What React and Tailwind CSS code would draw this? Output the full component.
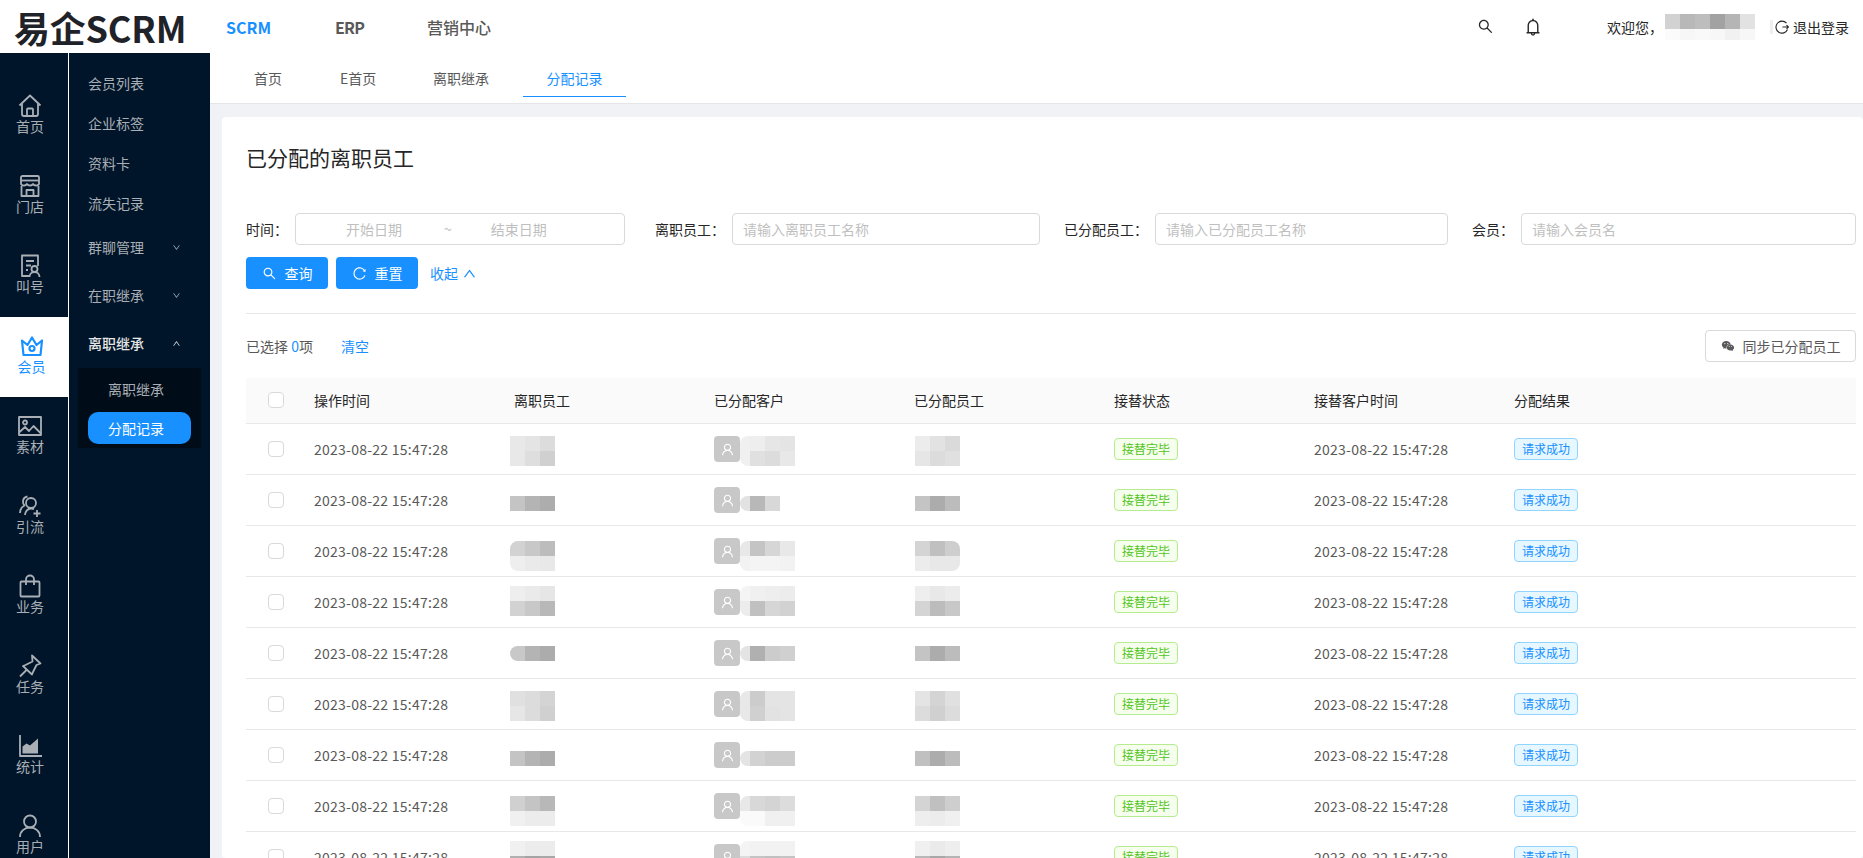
import { AiOutlineSearch, AiOutlineBell, AiOutlineReload, AiOutlineUser, AiOutlineUp, AiOutlineDown, AiFillWechat } from 'react-icons/ai';

const DATE = '2023-08-22 15:47:28';

const railIcons = {
  home: (
    <>
      <path d="M1.500 11.500 12 1.500l10.500 10" />
      <path d="M4 9.500V20a2 2 0 0 0 2 2h12a2 2 0 0 0 2-2V9.500" />
      <path d="M9 22v-6.500a1 1 0 0 1 1-1h4a1 1 0 0 1 1 1V22" />
    </>
  ),
  store: (
    <>
      <path d="M4.500 2h15A1.500 1.500 0 0 1 21 3.500V10a3 3 0 0 1-3 1.500 3.500 3.500 0 0 1-3-1.500 3.500 3.500 0 0 1-3 1.500A3.500 3.500 0 0 1 9 10a3.500 3.500 0 0 1-3 1.500A3 3 0 0 1 3 10V3.500A1.500 1.500 0 0 1 4.500 2Z" />
      <path d="M3 6.500h18" />
      <path d="M3.500 12v10h17V12" />
      <path d="M8.500 22v-6h7v6" />
    </>
  ),
  call: (
    <>
      <path d="M12 22H4V1.500h16V12" />
      <path d="M8 7h8M8 11.500h5M8 16h2" />
      <circle cx="16.500" cy="15" r="3" />
      <path d="M11.500 23c0-3 2.200-5 5-5s5 2 5 5" />
    </>
  ),
  crown: (
    <>
      <path d="M2 6.500 7.500 11 12 3.500l4.500 7.500L22 6.500 20.500 21h-17Z" strokeWidth="2.200" />
      <circle cx="12" cy="14.500" r="2.500" strokeWidth="2.200" />
    </>
  ),
  image: (
    <>
      <rect x="1" y="3" width="22" height="18" />
      <circle cx="7" cy="8.500" r="2" />
      <path d="m1 18.500 6-5.500 4 4 4.500-5 7.500 7.500" />
    </>
  ),
  flow: (
    <>
      <circle cx="13" cy="9" r="5" />
      <path d="M9.500 2.500A5.500 5.500 0 0 0 5 8c0 1.500.5 2.500 1.500 3.500C3.500 13 2 16 2 19" />
      <path d="M7 21c0-3 2.500-6.500 6-6.500 1 0 2 .2 3 .8" />
      <path d="M19 16v7M15.500 19.500h7" />
    </>
  ),
  bag: (
    <>
      <rect x="2.500" y="7.500" width="19" height="15" rx="1" />
      <path d="M8 11V5.500a4 4 0 0 1 8 0V11" />
    </>
  ),
  pin: (
    <>
      <path d="m14 1.500 8.500 8-4 1.500-3.500 7-1 2.500-9-8.500 2.500-1 7-3.500Z" />
      <path d="m8.500 16-6.500 6.500" />
    </>
  ),
  chart: (
    <>
      <path d="M2 1v21h22" fill="none" />
      <path d="M4.500 19.500v-7l4-3 3.500 2L20 4.500v15Z" fill="currentColor" stroke="none" />
    </>
  ),
  user: (
    <>
      <circle cx="12" cy="7.500" r="6" />
      <path d="M2 23c0-5.500 4.500-9.500 10-9.500S22 17.500 22 23" />
    </>
  ),
};

const railItems = [
  { label: '首页', icon: 'home' },
  { label: '门店', icon: 'store' },
  { label: '叫号', icon: 'call' },
  { label: '会员', icon: 'crown', active: true },
  { label: '素材', icon: 'image' },
  { label: '引流', icon: 'flow' },
  { label: '业务', icon: 'bag' },
  { label: '任务', icon: 'pin' },
  { label: '统计', icon: 'chart' },
  { label: '用户', icon: 'user' },
];

// mosaic cells per row: offset from row top, then a grey for each cell
const rows = [
  {
    top: 12,
    staff: ['e8e8e8 e4e4e4 dcdcdc', 'e8e8e8 dedede d0d0d0'],
    client: ['f0f0f0 eeeeee e6e6e6 e4e4e4', 'f0f0f0 e0e0e0 dcdcdc e8e8e8'],
    assign: ['ececec e2e2e2 dadada', 'e6e6e6 dcdcdc e0e0e0'],
  },
  {
    top: 21,
    staff: ['c4c4c4 b4b4b4 adadad'],
    client: ['e2e2e2 b8b8b8 d8d8d8 ffffff'],
    assign: ['c4c4c4 acacac bcbcbc'],
  },
  {
    top: 15,
    round: true,
    roundAssign: true,
    staff: ['d2d2d2 c8c8c8 bcbcbc', 'eeeeee eaeaea e8e8e8'],
    client: ['e8e8e8 c4c4c4 d6d6d6 e8e8e8', 'f2f2f2 f4f4f4 f4f4f4 f2f2f2'],
    assign: ['d4d4d4 c0c0c0 cecece', 'ececec e8e8e8 e8e8e8'],
  },
  {
    top: 9,
    staff: ['eeeeee eaeaea e6e6e6', 'd2d2d2 c8c8c8 b8b8b8'],
    client: ['f4f4f4 f0f0f0 eeeeee ececec', 'ececec c0c0c0 d6d6d6 d2d2d2'],
    assign: ['eeeeee e8e8e8 ececec', 'd4d4d4 bcbcbc c8c8c8'],
  },
  {
    top: 18,
    round: true,
    staff: ['c8c8c8 b4b4b4 acacac'],
    client: ['e4e4e4 b0b0b0 cccccc d0d0d0'],
    assign: ['c4c4c4 acacac bcbcbc'],
  },
  {
    top: 12,
    staff: ['e0e0e0 dcdcdc d4d4d4', 'e6e6e6 dcdcdc d0d0d0'],
    client: ['e8e8e8 cccccc e4e4e4 e4e4e4', 'e8e8e8 d0d0d0 e2e2e2 e4e4e4'],
    assign: ['e4e4e4 d4d4d4 e0e0e0', 'dcdcdc d0d0d0 dcdcdc'],
  },
  {
    top: 21,
    staff: ['c4c4c4 b4b4b4 acacac'],
    client: ['e4e4e4 d2d2d2 cccccc cccccc'],
    assign: ['c0c0c0 acacac bcbcbc'],
  },
  {
    top: 15,
    staff: ['d0d0d0 c4c4c4 b8b8b8', 'f0f0f0 ececec ececec'],
    client: ['e8e8e8 d8d8d8 d4d4d4 dcdcdc', 'fafafa fafafa f0f0f0 f0f0f0'],
    assign: ['d4d4d4 c0c0c0 cecece', 'eeeeee ececec f0f0f0'],
  },
  {
    top: 9,
    staff: ['f0f0f0 ececec ececec', 'b0b0b0 a4a4a4 a8a8a8'],
    client: ['f4f4f4 f2f2f2 f2f2f2 f2f2f2', 'dcdcdc c4c4c4 c0c0c0 c4c4c4'],
    assign: ['f0f0f0 eaeaea eeeeee', 'b8b8b8 a8a8a8 b4b4b4'],
  },
];

function RailIcon({ name }) {
  return (
    <svg viewBox="0 0 24 24" className="h-6 w-6 shrink-0" fill="none" stroke="currentColor" strokeWidth="1.800" strokeLinejoin="round">
      {railIcons[name]}
    </svg>
  );
}

function Mosaic({ lines, top, lead, className = '' }) {
  return (
    <div className={`flex flex-col self-start overflow-hidden ${className}`} style={{ marginTop: top }}>
      {lines.map((line, i) => (
        <div key={i} className="flex h-[15px]">
          {line.split(' ').map((c, j) => (
            <span key={j} style={{ background: `#${c}`, width: lead && j === 0 ? 10 : 15 }} />
          ))}
        </div>
      ))}
    </div>
  );
}

function Checkbox() {
  return <span className="block h-4 w-4 rounded-sm border border-[#d9d9d9] bg-white" />;
}

function Field({ label, width, labelWidth, placeholder }) {
  return (
    <div className="flex items-center">
      <label className="shrink-0 text-[#262626]" style={{ width: labelWidth }}>{label}</label>
      <input
        placeholder={placeholder}
        style={{ width }}
        className="h-8 rounded border border-[#d9d9d9] px-[10px] text-sm outline-none placeholder:text-[#bfbfbf]"
      />
    </div>
  );
}

function Row({ row }) {
  return (
    <div className="grid h-[51px] shrink-0 grid-cols-[68px_200px_200px_200px_200px_200px_200px_1fr] items-center border-b border-[#e8e8e8] text-[#595959]">
      <div className="pl-[22px]"><Checkbox /></div>
      <div className="tracking-[0.25px]">{DATE}</div>
      <div className="flex h-full -ml-1"><Mosaic lines={row.staff} top={row.top} className={row.round ? 'rounded-l-lg' : ''} /></div>
      <div className="flex h-full items-center">
        <span className="flex h-[26px] w-[26px] shrink-0 items-center justify-center rounded bg-[#c8c8c8] text-white">
          <AiOutlineUser size={15} />
        </span>
        <div className="flex h-full"><Mosaic lines={row.client} top={row.top} lead className="rounded-l-lg" /></div>
      </div>
      <div className="flex h-full ml-px"><Mosaic lines={row.assign} top={row.top} className={row.roundAssign ? 'rounded-r-lg' : ''} /></div>
      <div>
        <span className="inline-flex h-[22px] w-[64px] items-center justify-center rounded border border-[#b7eb8f] bg-[#f6ffed] text-xs text-[#52c41a]">接替完毕</span>
      </div>
      <div className="tracking-[0.25px]">{DATE}</div>
      <div>
        <span className="inline-flex h-[22px] w-[64px] items-center justify-center rounded border border-[#91d5ff] bg-[#e6f7ff] text-xs text-[#1890ff]">请求成功</span>
      </div>
    </div>
  );
}

export default function App() {
  return (
    <div className="flex h-screen w-full flex-col overflow-hidden bg-white text-sm" style={{ fontFamily: '"Noto Sans CJK SC", "Noto Sans", sans-serif' }}>
      {/* top bar */}
      <header className="flex h-[53px] shrink-0 items-center">
        <div className="w-[226px] shrink-0 pl-[14px] text-[36px] font-bold leading-none tracking-[-0.2px] text-[#1f2329]">易企SCRM</div>
        <nav className="flex items-center text-base font-medium text-[#595959]">
          <span className="w-[109px] font-bold text-[#1890ff]">SCRM</span>
          <span className="w-[92px] font-bold tracking-[-0.8px]">ERP</span>
          <span>营销中心</span>
        </nav>
        <div className="ml-auto flex items-center pr-[14px] text-[#262626]">
          <AiOutlineSearch size={17} className="mr-[29px]" />
          <AiOutlineBell size={20} className="mr-[64px]" />
          <span>欢迎您，</span>
          <div className="ml-[2px] flex h-[26px] w-[90px] flex-col">
            <div className="flex h-[15px]">
              <i className="w-[15px] bg-[#d2d2d2]" />
              <i className="w-[15px] bg-[#b8b8b8]" />
              <i className="w-[15px] bg-[#bdbdbd]" />
              <i className="w-[15px] bg-[#a2a2a2]" />
              <i className="w-[15px] bg-[#b5b5b5]" />
              <i className="w-[15px] bg-[#e2e2e2]" />
            </div>
            <div className="flex h-[11px]">
              <i className="w-[15px] bg-[#fbfbfb]" />
              <i className="w-[15px] bg-[#f7f7f7]" />
              <i className="w-[15px] bg-[#f9f9f9]" />
              <i className="w-[15px] bg-[#f7f7f7]" />
              <i className="w-[15px] bg-[#f1f1f1]" />
              <i className="w-[15px] bg-[#f7f7f7]" />
            </div>
          </div>
          <span className="ml-[15px] mr-[2px] h-[14px] w-[3px] bg-[#eeeeee]" />
          <svg viewBox="0 0 14 14" className="mr-1 h-[14px] w-[14px]" fill="none" stroke="currentColor" strokeWidth="1.100">
            <path d="M11.500 3.200A6 6 0 1 0 12.500 9.500" />
            <path d="M7.500 7h6M11.500 5.200 13.500 7l-2 1.800" />
          </svg>
          <span>退出登录</span>
        </div>
      </header>

      <div className="flex min-h-0 flex-1">
        {/* icon rail */}
        <aside className="flex w-[68px] shrink-0 flex-col bg-[#001529] pt-6 text-[#a9afb5]">
          {railItems.map((item) => (
            <div
              key={item.label}
              className={`flex h-20 shrink-0 flex-col items-center pt-[17px] ${item.active ? 'bg-white pr-[5px] text-[#1890ff]' : 'pr-2'}`}
            >
              <RailIcon name={item.icon} />
              <span className="-mt-[2px] leading-[20px]">{item.label}</span>
            </div>
          ))}
        </aside>

        {/* sub menu */}
        <aside className="ml-px flex w-[141px] shrink-0 flex-col bg-[#001529] pt-[10px] text-[#a9afb5]">
          <div className="flex h-10 shrink-0 items-center pl-[19px]">会员列表</div>
          <div className="flex h-10 shrink-0 items-center pl-[19px]">企业标签</div>
          <div className="flex h-10 shrink-0 items-center pl-[19px]">资料卡</div>
          <div className="flex h-10 shrink-0 items-center pl-[19px]">流失记录</div>
          <div className="flex h-12 shrink-0 items-center justify-between pl-[19px] pr-[29px]">
            群聊管理 <AiOutlineDown size={9} />
          </div>
          <div className="flex h-12 shrink-0 items-center justify-between pl-[19px] pr-[29px]">
            在职继承 <AiOutlineDown size={9} />
          </div>
          <div className="flex h-12 shrink-0 items-center justify-between pl-[19px] pr-[29px] font-medium text-[#e6e6e6]">
            离职继承 <AiOutlineUp size={9} />
          </div>
          <div className="mx-[9px] mt-px flex h-20 shrink-0 flex-col bg-[#000c17] px-[10px]">
            <div className="mb-[3px] flex h-[41px] shrink-0 items-center pl-5">离职继承</div>
            <div className="flex h-8 shrink-0 items-center rounded-[10px] bg-[#1890ff] pl-5 text-white">分配记录</div>
          </div>
        </aside>

        <main className="flex min-w-0 flex-1 flex-col bg-[#f0f2f5]">
          {/* tabs */}
          <div className="flex h-[51px] shrink-0 border-b border-[#e4e6ea] bg-white text-[#595959]">
            <div className="flex w-[130px] items-center pl-[44px]">首页</div>
            <div className="flex w-[93px] items-center">E首页</div>
            <div className="flex w-[90px] items-center">离职继承</div>
            <div className="mb-[6px] flex w-[103px] items-center justify-center border-b border-[#1890ff] pt-[6px] text-[#1890ff]">分配记录</div>
          </div>

          {/* content card */}
          <div className="ml-3 mt-[13px] flex min-h-0 flex-1 flex-col overflow-hidden rounded-sm bg-white pl-6 pr-[7px]">
            <h1 className="mt-[25px] text-[21px] font-normal leading-[30px] text-[#262626]">已分配的离职员工</h1>

            <div className="mt-[41px] flex items-center gap-6">
              <div className="flex items-center">
                <label className="w-[49px] shrink-0 text-[#262626]">时间：</label>
                <div className="flex h-8 w-[330px] items-center rounded border border-[#d9d9d9] text-[#bfbfbf]">
                  <span className="ml-[50px]">开始日期</span>
                  <span className="ml-[42px]">~</span>
                  <span className="ml-[39px]">结束日期</span>
                </div>
              </div>
              <div className="ml-1.5"><Field label="离职员工：" labelWidth={77} width={308} placeholder="请输入离职员工名称" /></div>
              <Field label="已分配员工：" labelWidth={91} width={293} placeholder="请输入已分配员工名称" />
              <div className="min-w-0 flex-1"><Field label="会员：" labelWidth={49} width={335} placeholder="请输入会员名" /></div>
            </div>

            <div className="mt-3 flex items-center gap-2">
              <button className="flex h-8 w-[82px] items-center justify-center gap-2 rounded bg-[#1890ff] text-white"><AiOutlineSearch size={15} />查询</button>
              <button className="flex h-8 w-[82px] items-center justify-center gap-2 rounded bg-[#1890ff] text-white"><AiOutlineReload size={15} />重置</button>
              <button className="ml-1 flex items-center gap-1 text-[#1890ff]">收起 <AiOutlineUp size={15} /></button>
            </div>

            <div className="mt-6 border-t border-[#e8e8e8]" />

            <div className="mt-4 flex h-8 items-center text-[#595959]">
              <span>已选择 <span className="text-[#1890ff]">0</span>项</span>
              <span className="ml-[28px] text-[#1890ff]">清空</span>
              <button className="ml-auto flex h-8 w-[151px] items-center justify-center gap-2 rounded border border-[#d9d9d9] bg-white">
                <AiFillWechat size={14} />同步已分配员工
              </button>
            </div>

            {/* table */}
            <div className="mt-4 grid h-[46px] shrink-0 grid-cols-[68px_200px_200px_200px_200px_200px_200px_1fr] items-center border-b border-[#e8e8e8] bg-[#fafafa] pb-px text-[#262626]">
              <div className="pl-[22px]"><Checkbox /></div>
              <div>操作时间</div>
              <div>离职员工</div>
              <div>已分配客户</div>
              <div>已分配员工</div>
              <div>接替状态</div>
              <div>接替客户时间</div>
              <div>分配结果</div>
            </div>
            {rows.map((row, i) => <Row key={i} row={row} />)}
          </div>
        </main>
      </div>
    </div>
  );
}
